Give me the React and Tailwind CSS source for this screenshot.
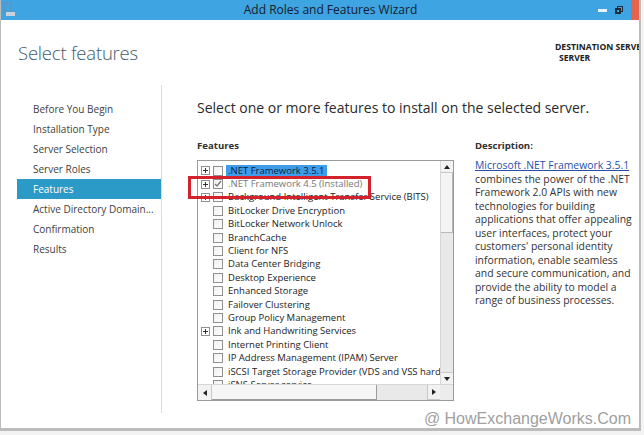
const steps = [
  "Before You Begin",
  "Installation Type",
  "Server Selection",
  "Server Roles",
  "Features",
  "Active Directory Domain...",
  "Confirmation",
  "Results",
];

const features = [
  { name: ".NET Framework 3.5.1", expand: true, selected: true },
  { name: ".NET Framework 4.5 (Installed)", expand: true, checked: true, installed: true },
  { name: "Background Intelligent Transfer Service (BITS)", expand: true },
  { name: "BitLocker Drive Encryption" },
  { name: "BitLocker Network Unlock" },
  { name: "BranchCache" },
  { name: "Client for NFS" },
  { name: "Data Center Bridging" },
  { name: "Desktop Experience" },
  { name: "Enhanced Storage" },
  { name: "Failover Clustering" },
  { name: "Group Policy Management" },
  { name: "Ink and Handwriting Services", expand: true },
  { name: "Internet Printing Client" },
  { name: "IP Address Management (IPAM) Server" },
  { name: "iSCSI Target Storage Provider (VDS and VSS hardware providers)" },
  { name: "iSNS Server service" },
];

const font = { fontFamily: '"Open Sans", "Noto Sans", sans-serif' };

function ExpandBox() {
  return (
    <div className="w-[9px] h-[9px] border border-[#919191] bg-white flex items-center justify-center shrink-0">
      <svg width="5" height="5" viewBox="0 0 5 5">
        <path d="M0 2.5h5M2.5 0v5" stroke="#333" strokeWidth="1" />
      </svg>
    </div>
  );
}

function CheckBox({ checked }) {
  return (
    <div className="w-[10px] h-[10px] border border-[#8e8f8f] bg-gradient-to-br from-[#f0f0f0] to-white flex items-center justify-center shrink-0">
      {checked && (
        <svg width="8" height="8" viewBox="0 0 8 8">
          <path d="M1 4l2 2 4-5" stroke="#7a7a7a" strokeWidth="1.4" fill="none" />
        </svg>
      )}
    </div>
  );
}

function Arrow({ dir }) {
  const d = {
    up: "M0 4L3 0L6 4Z",
    down: "M0 0L6 0L3 4Z",
    left: "M4 0L4 6L0 3Z",
    right: "M0 0L4 3L0 6Z",
  }[dir];
  const w = dir === "up" || dir === "down" ? 6 : 4;
  const h = dir === "up" || dir === "down" ? 4 : 6;
  return (
    <svg width={w} height={h} viewBox={`0 0 ${w} ${h}`}>
      <path d={d} fill="#222" />
    </svg>
  );
}

function FeatureList() {
  return (
    <div className="relative w-[257px] h-[241px] border border-[#9a9a9a] bg-white flex flex-col">
      <div className="flex flex-1 min-h-0">
        <div className="flex-1 min-w-0 overflow-hidden pt-[3px] pl-[3px]">
          {features.map((f) => (
            <div key={f.name} className="h-[13.4px] flex items-center whitespace-nowrap">
              <div className="w-[12px] flex shrink-0">{f.expand && <ExpandBox />}</div>
              <CheckBox checked={f.checked} />
              <span
                className={`ml-[3px] px-[2px] text-[9.5px] leading-[12px] ${
                  f.selected ? "bg-[#3f9ce8] text-[#0c1e3c]" : f.installed ? "text-[#777]" : "text-[#222]"
                }`}
              >
                {f.name}
              </span>
            </div>
          ))}
        </div>
        <div className="w-[13px] bg-[#e9e9e9] border-l border-[#d6d6d6] flex flex-col shrink-0">
          <div className="h-[12px] bg-[#f2f2f2] border-b border-[#c8c8c8] flex items-center justify-center">
            <Arrow dir="up" />
          </div>
          <div className="h-[60px] bg-[#f4f4f4] border-b border-[#b8b8b8] border-r border-[#8a8a8a]" />
          <div className="flex-1" />
          <div className="h-[12px] bg-[#f2f2f2] border-t border-[#c8c8c8] flex items-center justify-center">
            <Arrow dir="down" />
          </div>
        </div>
      </div>
      <div className="h-[16px] flex border-t border-[#d6d6d6] bg-[#e9e9e9]">
        <div className="w-[14px] bg-[#f2f2f2] border-r border-[#c8c8c8] flex items-center justify-center">
          <Arrow dir="left" />
        </div>
        <div className="w-[165px] bg-[#f6f6f6] border-r border-b border-[#9c9c9c]" />
        <div className="flex-1" />
        <div className="w-[13px] bg-[#f2f2f2] border-l border-[#c8c8c8] border-b border-[#8a8a8a] flex items-center justify-center">
          <Arrow dir="right" />
        </div>
        <div className="w-[13px] bg-[#ececec]" />
      </div>
      <div className="absolute left-[-10px] top-[15px] w-[183px] h-[23px] border-[3px] border-[#d3222c]" />
    </div>
  );
}

export default function App() {
  return (
    <div className="w-[644px] h-[435px] bg-[#f3f3f3] overflow-hidden" style={font}>
      <div className="w-[641px] h-[431px] bg-white border-l border-[#bcbcbc] border-r-2 border-b-[3px] border-[#4a4a4a] flex flex-col">
        <div className="h-[20px] bg-[#3ea4e2] flex items-center relative shrink-0">
          <svg className="ml-[2px]" width="13" height="16" viewBox="0 0 13 16">
            <rect x="1" y="1" width="7" height="9" fill="none" stroke="#6b8fae" />
            <rect x="3" y="10" width="9" height="4" fill="#c9d3dc" />
          </svg>
          <div className="flex-1 text-center text-[12px] text-[#14202b] pl-[50px]">Add Roles and Features Wizard</div>
          <div className="w-[44px] h-[20px] flex items-center">
            <div className="w-[9px] h-[3px] bg-[#e8f2fa] ml-[3px]" />
            <div className="ml-[8px] relative w-[8px] h-[8px]">
              <div className="absolute left-[2px] top-0 w-[6px] h-[6px] border border-[#1d2b38]" />
              <div className="absolute left-0 top-[2px] w-[6px] h-[6px] border-2 border-[#1d2b38] bg-[#3ea4e2]" />
            </div>
            <div className="ml-[8px] w-[8px] h-[20px] bg-[#e4634d]" />
          </div>
        </div>

        <div className="h-[65px] flex shrink-0">
          <div className="flex-1 pl-[17px] pt-[18px] text-[18.5px] font-light text-[#3e5c6c] leading-[30px] tracking-[-0.2px]">
            Select features
          </div>
          <div className="w-[84px] pt-[22px] text-[8.6px] font-bold text-[#222] leading-[11px] whitespace-nowrap overflow-hidden">
            <div>DESTINATION SERVER</div>
            <div className="pl-[4px]">SERVER</div>
          </div>
        </div>

        <div className="flex flex-1 min-h-0">
          <div className="w-[161px] pl-[16px] pt-[14px] mb-[15px] border-r border-[#dcdcdc] shrink-0">
            {steps.map((s) => (
              <div
                key={s}
                className={`h-[20px] flex items-center pl-[16px] text-[10px] ${
                  s === "Features" ? "bg-[#2c9ac6] text-white" : "text-[#404040]"
                }`}
              >
                {s}
              </div>
            ))}
          </div>
          <div className="flex-1 pl-[35px] pt-[13px] flex flex-col">
            <div className="text-[14px] leading-[20px] text-[#2a2a2a] whitespace-nowrap">
              Select one or more features to install on the selected server.
            </div>
            <div className="flex mt-[21px]">
              <div>
                <div className="text-[9.6px] font-bold text-[#303030] leading-[13px] mb-[8px]">Features</div>
                <FeatureList />
              </div>
              <div className="ml-[21px] w-[162px]">
                <div className="text-[9.6px] font-bold text-[#303030] leading-[13px] mb-[7px]">Description:</div>
                <div className="text-[10.4px] leading-[13.5px] text-[#333]">
                  <span className="text-[#2a4fa8] underline">Microsoft .NET Framework 3.5.1</span>{" "}
                  combines the power of the .NET Framework 2.0 APIs with new technologies for building
                  applications that offer appealing user interfaces, protect your customers' personal identity
                  information, enable seamless and secure communication, and provide the ability to model a
                  range of business processes.
                </div>
              </div>
            </div>
            <div className="mt-auto mb-[-3px] pr-[8px] text-right text-[16px] text-[#a0a0a0] whitespace-nowrap" style={{ fontFamily: '"Liberation Sans", Arial, sans-serif' }}>
              @ HowExchangeWorks.Com
            </div>
          </div>
        </div>
      </div>
    </div>
  );
}
